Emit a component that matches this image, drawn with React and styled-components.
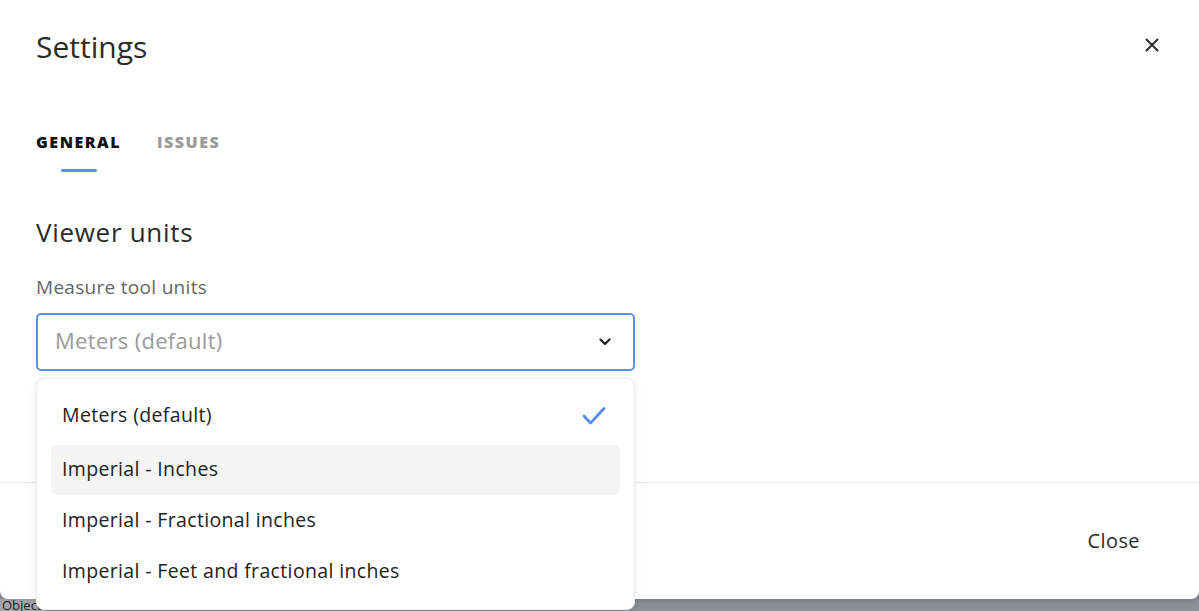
import React from "react";
import styled, { createGlobalStyle } from "styled-components";

const Global = createGlobalStyle`
  html, body {
    margin: 0;
    padding: 0;
    background: #8b9198;
    font-family: "Open Sans", "Noto Sans", sans-serif;
    overflow: hidden;
  }
`;

const Page = styled.div`
  position: relative;
  width: 1199px;
  height: 611px;
  background: #8b9198;
  overflow: hidden;
`;

const Behind = styled.div`
  position: absolute;
  left: 0;
  bottom: 0;
  height: 12px;
  padding: 0 2px;
  background: #a9a9a9;
  color: #222;
  font-size: 13px;
  line-height: 12px;
`;

const Dialog = styled.div`
  position: relative;
  height: 599px;
  background: #fff;
  border-radius: 0 0 8px 8px;
  display: flex;
  flex-direction: column;
  box-shadow: 0 2px 6px rgba(0, 0, 0, 0.15);
`;

const Header = styled.div`
  display: flex;
  justify-content: space-between;
  align-items: flex-start;
  padding: 27px 40px 0 36px;
`;

const Title = styled.h1`
  margin: 0;
  font-size: 30px;
  font-weight: 500;
  color: #2b2b2b;
  line-height: 40px;
`;

const CloseIcon = styled.button`
  border: 0;
  background: none;
  padding: 0;
  margin-top: 11px;
  width: 14px;
  height: 14px;
  cursor: pointer;
  display: flex;
`;

const Tabs = styled.div`
  display: flex;
  gap: 36px;
  padding: 0 36px;
  margin-top: 65px;
`;

const Tab = styled.div`
  position: relative;
  font-size: 16px;
  font-weight: 800;
  letter-spacing: 1.5px;
  line-height: 20px;
  padding-bottom: 20px;
  color: ${(p) => (p.$active ? "#111" : "#9a9a9a")};

  &::after {
    content: "";
    display: ${(p) => (p.$active ? "block" : "none")};
    position: absolute;
    left: 50%;
    bottom: 0;
    width: 36px;
    height: 3px;
    margin-left: -18px;
    border-radius: 2px;
    background: #5b8def;
  }
`;

const Body = styled.div`
  flex: 1;
  padding: 44px 36px 0;
`;

const SectionTitle = styled.h2`
  margin: 0;
  font-size: 26px;
  font-weight: 500;
  color: #2b2b2b;
  line-height: 32px;
  letter-spacing: 0.7px;
`;

const Label = styled.div`
  margin-top: 27px;
  font-size: 19px;
  color: #666;
  line-height: 24px;
  letter-spacing: 0.3px;
`;

const SelectWrap = styled.div`
  position: relative;
  width: 599px;
  margin-top: 14px;
`;

const SelectBox = styled.div`
  height: 58px;
  box-sizing: border-box;
  border: 2px solid #5b8def;
  border-radius: 5px;
  display: flex;
  align-items: center;
  justify-content: space-between;
  padding: 0 22px 0 17px;
  font-size: 22px;
  letter-spacing: 0.3px;
  color: #9a9a9a;
`;

const SelectValue = styled.span`
  padding-bottom: 5px;
`;

const Menu = styled.div`
  position: absolute;
  top: 65px;
  left: 0;
  right: 0;
  height: 232px;
  box-sizing: border-box;
  background: #fff;
  border: 1px solid #ececec;
  border-radius: 8px;
  box-shadow: 0 2px 8px rgba(0, 0, 0, 0.08);
  padding: 12px 14px;
  z-index: 5;
  display: flex;
  flex-direction: column;
  gap: 1px;
`;

const Option = styled.div`
  flex: none;
  height: 50px;
  box-sizing: border-box;
  margin-bottom: ${(p) => (p.$first ? "3px" : "0")};
  border-radius: 6px;
  display: flex;
  align-items: center;
  justify-content: space-between;
  padding: 0 14px 4px 11px;
  font-size: 19.5px;
  letter-spacing: 0.35px;
  color: #222;
  background: ${(p) => (p.$hover ? "#f4f4f4" : "transparent")};

  svg {
    margin-top: 4px;
  }
`;

const Footer = styled.div`
  border-top: 1px solid #e8e8e8;
  height: 116px;
  display: flex;
  align-items: center;
  justify-content: flex-end;
  padding: 0 59px 0 0;
`;

const FooterButton = styled.button`
  border: 0;
  background: none;
  font-family: inherit;
  font-size: 20px;
  letter-spacing: 0.4px;
  color: #2b2b2b;
  padding: 0;
  margin-top: -2px;
  cursor: pointer;
`;

const options = [
  "Meters (default)",
  "Imperial - Inches",
  "Imperial - Fractional inches",
  "Imperial - Feet and fractional inches",
];

export default function App() {
  return (
    <Page>
      <Global />
      <Behind>Object</Behind>
      <Dialog>
        <Header>
          <Title>Settings</Title>
          <CloseIcon aria-label="Close">
            <svg width="14" height="14" viewBox="0 0 14 14">
              <path d="M1.5 1.5 L12.5 12.5 M12.5 1.5 L1.5 12.5" stroke="#2b2b2b" strokeWidth="2" strokeLinecap="round" />
            </svg>
          </CloseIcon>
        </Header>
        <Tabs>
          <Tab $active>GENERAL</Tab>
          <Tab>ISSUES</Tab>
        </Tabs>
        <Body>
          <SectionTitle>Viewer units</SectionTitle>
          <Label>Measure tool units</Label>
          <SelectWrap>
            <SelectBox>
              <SelectValue>Meters (default)</SelectValue>
              <svg width="12" height="8" viewBox="0 0 12 8">
                <path d="M1.5 1.5 L6 6 L10.5 1.5" fill="none" stroke="#222" strokeWidth="2.2" strokeLinecap="round" strokeLinejoin="round" />
              </svg>
            </SelectBox>
            <Menu>
              {options.map((o, i) => (
                <Option key={o} $first={i === 0} $hover={i === 1}>
                  <span>{o}</span>
                  {i === 0 && (
                    <svg width="24" height="20" viewBox="0 0 24 20">
                      <path d="M2 10 L8.5 17 L22 2.5" fill="none" stroke="#5b8def" strokeWidth="2.8" strokeLinecap="round" strokeLinejoin="round" />
                    </svg>
                  )}
                </Option>
              ))}
            </Menu>
          </SelectWrap>
        </Body>
        <Footer>
          <FooterButton>Close</FooterButton>
        </Footer>
      </Dialog>
    </Page>
  );
}
